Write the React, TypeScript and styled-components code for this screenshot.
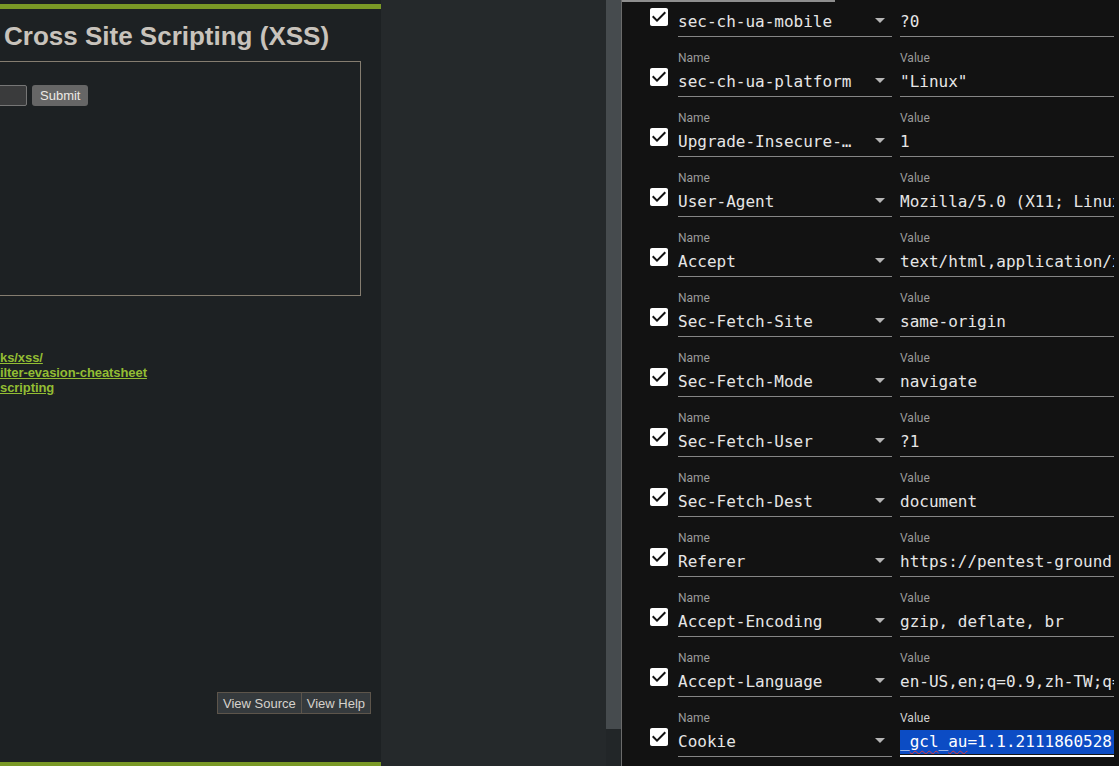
import React from "react";
import styled, { createGlobalStyle, css } from "styled-components";

const GlobalStyle = createGlobalStyle`
  html, body { margin: 0; padding: 0; background: #121212; }
  body { width: 1119px; height: 766px; overflow: hidden; }
  * { box-sizing: border-box; }
`;

const Screen = styled.div`
  display: flex;
  width: 1119px;
  height: 766px;
  overflow: hidden;
`;

/* ---------- Left: the DVWA page ---------- */
const PagePane = styled.div`
  width: 381px;
  flex: 0 0 381px;
  height: 766px;
  background: #1d2123;
  display: flex;
  flex-direction: column;
  overflow: hidden;
  font-family: "Liberation Sans", Arial, sans-serif;
`;

const GreenBar = styled.div<{ $top?: boolean }>`
  height: ${(p) => (p.$top ? "5px" : "4px")};
  flex: 0 0 auto;
  background: #7a9926;
  margin-top: ${(p) => (p.$top ? "4px" : "0")};
`;

const PageBody = styled.div`
  flex: 1;
  display: flex;
  flex-direction: column;
`;

const Title = styled.h1`
  margin: 12px 0 0 4px;
  font-size: 26px;
  line-height: 30px;
  font-weight: 700;
  color: #c8c3bc;
  white-space: nowrap;
`;

const FormBox = styled.div`
  margin: 10px 0 0 -40px;
  width: 401px;
  height: 235px;
  border: 1px solid #857d70;
  padding: 23px 0 0 10px;
`;

const FormRow = styled.div`
  display: flex;
  gap: 5px;
  align-items: center;
`;

const TextInput = styled.div`
  width: 56px;
  height: 21px;
  background: #3a3b3c;
  border: 1px solid #767676;
  border-radius: 2px;
`;

const SubmitButton = styled.div`
  height: 21px;
  padding: 0 8px;
  background: #666666;
  border-radius: 3px;
  color: #ece9e5;
  font-size: 13px;
  line-height: 21px;
`;

const LinkList = styled.div`
  margin-top: 54px;
  display: flex;
  flex-direction: column;
`;

const RefLink = styled.a`
  font-size: 13px;
  line-height: 15px;
  font-weight: 700;
  color: #93bd33;
  text-decoration: underline;
  white-space: nowrap;
  letter-spacing: -0.08px;
`;

const FooterButtons = styled.div`
  margin-top: auto;
  margin-bottom: 48px;
  margin-right: 10px;
  align-self: flex-end;
  display: flex;
`;

const FooterButton = styled.div<{ $first?: boolean }>`
  height: 22px;
  padding: 0 5px;
  background: #353a3d;
  border: 1px solid #5d554b;
  ${(p) =>
    !p.$first &&
    css`
      border-left: none;
    `}
  color: #d6d2cc;
  font-size: 13px;
  line-height: 21px;
  white-space: nowrap;
`;

/* ---------- Middle blank and scrollbar ---------- */
const BlankPane = styled.div`
  width: 225px;
  flex: 0 0 225px;
  background: #25292b;
`;

const Scrollbar = styled.div`
  width: 15px;
  flex: 0 0 15px;
  display: flex;
  flex-direction: column;
  background: #222628;
`;

const ScrollThumb = styled.div`
  height: 729px;
  background: #464b4e;
`;

const Divider = styled.div`
  width: 1px;
  flex: 0 0 1px;
  background: #6b6b6b;
`;

/* ---------- Right: headers editor ---------- */
const EditorPane = styled.div`
  flex: 1;
  position: relative;
  background: #121212;
  overflow: hidden;
  font-family: Roboto, "Noto Sans", sans-serif;
`;

const TopEdge = styled.div`
  position: absolute;
  left: 0;
  top: 0;
  width: 213px;
  height: 2px;
  background: #8e8e8e;
`;

const HeaderList = styled.div`
  margin-top: -16px;
  padding-left: 28px;
  display: flex;
  flex-direction: column;
`;

const HeaderRow = styled.div`
  display: flex;
  align-items: flex-start;
  height: 60px;
`;

const CheckCell = styled.div`
  width: 18px;
  height: 18px;
  margin-top: 24px;
  flex: 0 0 18px;
  svg {
    display: block;
    margin: -3px;
  }
`;

const Field = styled.div<{ $gap: number }>`
  width: 214px;
  flex: 0 0 214px;
  margin-left: ${(p) => p.$gap}px;
  display: flex;
  flex-direction: column;
`;

const FieldLabel = styled.div<{ $focused?: boolean; $hidden?: boolean }>`
  margin-top: 7px;
  height: 14px;
  font-size: 12px;
  line-height: 14px;
  color: ${(p) => (p.$focused ? "#d0d0d0" : "#9b9b9b")};
  visibility: ${(p) => (p.$hidden ? "hidden" : "visible")};
`;

const InputLine = styled.div<{ $focused?: boolean }>`
  display: flex;
  align-items: center;
  height: 32px;
  padding-top: 7px;
  padding-bottom: ${(p) => (p.$focused ? "2px" : "4px")};
  border-bottom: ${(p) => (p.$focused ? "2px solid #ffffff" : "1px solid #858585")};
  font-family: "DejaVu Sans Mono", "Liberation Mono", monospace;
  font-size: 16px;
  color: #e6e6e6;
`;

const InputText = styled.div<{ $width?: number }>`
  height: 20px;
  line-height: 20px;
  white-space: nowrap;
  overflow: hidden;
  text-overflow: ${(p) => (p.$width ? "ellipsis" : "clip")};
  ${(p) =>
    p.$width
      ? css`
          flex: 0 0 ${p.$width}px;
        `
      : css`
          flex: 1;
          min-width: 0;
        `}
`;

const Selection = styled.div`
  flex: 1;
  min-width: 0;
  height: 24px;
  margin: -3px 0 -2px;
  line-height: 24px;
  background: #0c4cc4;
  color: #ffffff;
  white-space: nowrap;
  overflow: hidden;
`;

const Misspelled = styled.span`
  text-decoration-line: underline;
  text-decoration-style: wavy;
  text-decoration-color: #e23b3b;
  text-decoration-thickness: 1px;
  text-underline-offset: 3px;
`;

const Arrow = styled.svg`
  margin: -4px 0 0 auto;
  flex: 0 0 24px;
  display: block;
`;

const CheckIcon = () => (
  <svg width="24" height="24" viewBox="0 0 24 24">
    <path
      fill="#ffffff"
      fillRule="evenodd"
      d="M19 3H5c-1.11 0-2 .9-2 2v14c0 1.1.89 2 2 2h14c1.11 0 2-.9 2-2V5c0-1.1-.89-2-2-2zm-9 14l-5-5 1.41-1.41L10 14.17l7.59-7.59L19 8l-9 9z"
    />
  </svg>
);

const DropArrow = () => (
  <Arrow width="24" height="24" viewBox="0 0 24 24">
    <path fill="#b5b5b5" d="M7 10l5 5 5-5z" />
  </Arrow>
);

type Header = { name: string; value: string };

const headers: Header[] = [
  { name: "sec-ch-ua-mobile", value: "?0" },
  { name: "sec-ch-ua-platform", value: '"Linux"' },
  { name: "Upgrade-Insecure-Requests", value: "1" },
  { name: "User-Agent", value: "Mozilla/5.0 (X11; Linux x86_64) AppleWebKit/537.36" },
  { name: "Accept", value: "text/html,application/xhtml+xml,application/xml" },
  { name: "Sec-Fetch-Site", value: "same-origin" },
  { name: "Sec-Fetch-Mode", value: "navigate" },
  { name: "Sec-Fetch-User", value: "?1" },
  { name: "Sec-Fetch-Dest", value: "document" },
  { name: "Referer", value: "https://pentest-ground.com/xss_r/" },
  { name: "Accept-Encoding", value: "gzip, deflate, br" },
  { name: "Accept-Language", value: "en-US,en;q=0.9,zh-TW;q=0.8,zh;q=0.7" },
  { name: "Cookie", value: "_gcl_au=1.1.2111860528.1700000000" },
];

const CookieValue = () => (
  <Selection>
    _<Misspelled>gcl</Misspelled>_<Misspelled>au</Misspelled>=1.1.2111860528.1700000000; PHPSESSID
  </Selection>
);

export default function App() {
  return (
    <>
      <GlobalStyle />
      <Screen>
        <PagePane>
          <GreenBar $top />
          <PageBody>
            <Title>Cross Site Scripting (XSS)</Title>
            <FormBox>
              <FormRow>
                <TextInput />
                <SubmitButton>Submit</SubmitButton>
              </FormRow>
            </FormBox>
            <LinkList>
              <RefLink>ks/xss/</RefLink>
              <RefLink>ilter-evasion-cheatsheet</RefLink>
              <RefLink>scripting</RefLink>
            </LinkList>
            <FooterButtons>
              <FooterButton $first>View Source</FooterButton>
              <FooterButton>View Help</FooterButton>
            </FooterButtons>
          </PageBody>
          <GreenBar />
        </PagePane>
        <BlankPane />
        <Scrollbar>
          <ScrollThumb />
        </Scrollbar>
        <Divider />
        <EditorPane>
          <HeaderList>
            {headers.map((h, i) => {
              const focused = h.name === "Cookie";
              const scrolledOff = i === 0;
              return (
                <HeaderRow key={h.name}>
                  <CheckCell>
                    <CheckIcon />
                  </CheckCell>
                  <Field $gap={10}>
                    <FieldLabel $hidden={scrolledOff}>Name</FieldLabel>
                    <InputLine>
                      <InputText $width={178}>{h.name}</InputText>
                      <DropArrow />
                    </InputLine>
                  </Field>
                  <Field $gap={8}>
                    <FieldLabel $focused={focused} $hidden={scrolledOff}>
                      Value
                    </FieldLabel>
                    <InputLine $focused={focused}>
                      {focused ? <CookieValue /> : <InputText>{h.value}</InputText>}
                    </InputLine>
                  </Field>
                </HeaderRow>
              );
            })}
          </HeaderList>
          <TopEdge />
        </EditorPane>
      </Screen>
    </>
  );
}
